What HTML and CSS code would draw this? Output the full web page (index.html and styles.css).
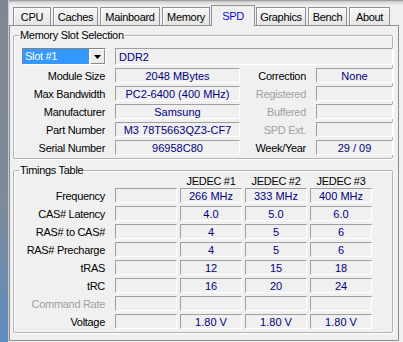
FILE: index.html
```html
<!DOCTYPE html>
<html>
<head>
	<meta charset="utf-8"/>
	<title>CPU-Z SPD</title>
	<link rel="stylesheet" href="styles.css">
</head>
<body>
	<div class="window">
		<div class="frame"></div>
		<div class="client">
			<div class="topband"></div>
			<ul class="tabs">
				<li class="tab">CPU</li>
				<li class="tab">Caches</li>
				<li class="tab">Mainboard</li>
				<li class="tab">Memory</li>
				<li class="tab active">SPD</li>
				<li class="tab">Graphics</li>
				<li class="tab">Bench</li>
				<li class="tab">About</li>
			</ul>
			<div class="panel">
				<fieldset class="group slot-group">
					<legend>Memory Slot Selection</legend>
					<div class="slot-grid">
						<div class="combo">
							<span class="combo-value">Slot #1</span>
							<span class="combo-btn"><svg width="7" height="4" viewBox="0 0 7 4"><polygon points="0,0 7,0 3.5,4" fill="#000"/></svg></span>
						</div>
						<div class="field wide left">DDR2</div>

						<div class="label">Module Size</div>
						<div class="field">2048 MBytes</div>
						<div class="label">Correction</div>
						<div class="field">None</div>

						<div class="label">Max Bandwidth</div>
						<div class="field">PC2-6400 (400 MHz)</div>
						<div class="label off">Registered</div>
						<div class="field"></div>

						<div class="label">Manufacturer</div>
						<div class="field">Samsung</div>
						<div class="label off">Buffered</div>
						<div class="field"></div>

						<div class="label">Part Number</div>
						<div class="field">M3 78T5663QZ3-CF7</div>
						<div class="label off">SPD Ext.</div>
						<div class="field"></div>

						<div class="label">Serial Number</div>
						<div class="field">96958C80</div>
						<div class="label">Week/Year</div>
						<div class="field">29 / 09</div>
					</div>
				</fieldset>

				<fieldset class="group timing-group">
					<legend>Timings Table</legend>
					<div class="timing-grid">
						<div></div>
						<div></div>
						<div class="head">JEDEC #1</div>
						<div class="head">JEDEC #2</div>
						<div class="head">JEDEC #3</div>

						<div class="label">Frequency</div>
						<div class="field"></div>
						<div class="field">266 MHz</div>
						<div class="field">333 MHz</div>
						<div class="field">400 MHz</div>

						<div class="label">CAS# Latency</div>
						<div class="field"></div>
						<div class="field">4.0</div>
						<div class="field">5.0</div>
						<div class="field">6.0</div>

						<div class="label">RAS# to CAS#</div>
						<div class="field"></div>
						<div class="field">4</div>
						<div class="field">5</div>
						<div class="field">6</div>

						<div class="label">RAS# Precharge</div>
						<div class="field"></div>
						<div class="field">4</div>
						<div class="field">5</div>
						<div class="field">6</div>

						<div class="label">tRAS</div>
						<div class="field"></div>
						<div class="field">12</div>
						<div class="field">15</div>
						<div class="field">18</div>

						<div class="label">tRC</div>
						<div class="field"></div>
						<div class="field">16</div>
						<div class="field">20</div>
						<div class="field">24</div>

						<div class="label off">Command Rate</div>
						<div class="field"></div>
						<div class="field"></div>
						<div class="field"></div>
						<div class="field"></div>

						<div class="label">Voltage</div>
						<div class="field"></div>
						<div class="field">1.80 V</div>
						<div class="field">1.80 V</div>
						<div class="field">1.80 V</div>
					</div>
				</fieldset>
			</div>
		</div>
	</div>
</body>
</html>
```

FILE: styles.css
```css
* {
	box-sizing: border-box;
}
body {
	margin: 0;
	width: 403px;
	height: 342px;
	overflow: hidden;
	background: #f0f0f0;
	font-family: "Liberation Sans", Arial, sans-serif;
	font-size: 11px;
	letter-spacing: -0.3px;
	color: #000;
}
.window {
	display: flex;
	height: 342px;
}
.frame {
	width: 9px;
	flex-shrink: 0;
	background: linear-gradient(to bottom, #7e8791 0%, #7d8a98 60%, #5f8cbf 100%);
	border-right: 1px solid #c4cbd2;
}
.client {
	flex: 1;
	min-width: 0;
	display: flex;
	flex-direction: column;
}
.topband {
	height: 5px;
	background: linear-gradient(to bottom, #8e8e8e, #d8d8d8 40%, #ececec);
}

/* tabs */
.tabs {
	list-style: none;
	margin: 0;
	padding: 0 0 0 4px;
	height: 20px;
	display: flex;
	align-items: flex-end;
	gap: 2px;
	position: relative;
	z-index: 1;
}
.tab {
	height: 18px;
	padding-top: 1px;
	line-height: 16px;
	text-align: center;
	border: 1px solid #8e9097;
	border-bottom: none;
	background: linear-gradient(to bottom, #f6f6f6, #e5e5e5);
	box-shadow: inset 1px 1px 0 #fff;
}
.tab:nth-child(1) { width: 38px; }
.tab:nth-child(2) { width: 45px; }
.tab:nth-child(3) { width: 60px; }
.tab:nth-child(4) { width: 48px; }
.tab:nth-child(5) { width: 44px; }
.tab:nth-child(6) { width: 50px; }
.tab:nth-child(7) { width: 39px; }
.tab:nth-child(8) { width: 41px; }
.tab.active {
	height: 21px;
	margin: 0 -1px -1px;
	padding-top: 0;
	line-height: 20px;
	color: #0a0adc;
	background: #f0f0f0;
	box-shadow: none;
}

/* panel */
.panel {
	height: 316px;
	margin-right: 4px;
	border: 1px solid #898c95;
	background: #f0f0f0;
}
.group {
	margin: 3px 5px 0 3px;
	padding: 6px 1px 3px 8px;
	border: 1px solid #b3b3b3;
	border-radius: 2px;
	box-shadow: inset 1px 1px 0 #fff, 1px 1px 0 #fff;
	min-width: 0;
}
.group legend {
	padding: 0 1px;
	margin-left: -3px;
	line-height: 13px;
}
.timing-group {
	margin-top: 5px;
	padding-top: 0;
}

.label {
	padding: 1px 10px 0 0;
	line-height: 14px;
	text-align: right;
	white-space: nowrap;
}
.label.off {
	color: #a0a0a0;
}
.field {
	height: 15px;
	padding-top: 1px;
	line-height: 12px;
	text-align: center;
	white-space: nowrap;
	overflow: hidden;
	letter-spacing: 0;
	color: #000080;
	border: 1px solid;
	border-color: #a0a0a0 #fff #fff #a0a0a0;
}
.field.left {
	text-align: left;
	padding-left: 3px;
}

/* memory slot */
.slot-grid {
	display: grid;
	grid-template-columns: 93px 125px 76px 77px;
	grid-template-rows: 17px repeat(5, 15px);
	row-gap: 3px;
}
.slot-grid .field.wide {
	grid-column: 2 / 5;
	height: 17px;
	padding-top: 2px;
}
.combo {
	width: 84px;
	height: 17px;
	display: flex;
	border: 1px solid;
	border-color: #828282 #fff #fff #828282;
	background: #fff;
}
.combo-value {
	flex: 1;
	margin: 0 1px 0 0;
	padding: 1px 0 0 2px;
	line-height: 13px;
	background: #3399ff;
	color: #fff;
}
.combo-btn {
	width: 15px;
	display: flex;
	align-items: center;
	justify-content: center;
	background: #ececec;
	border: 1px solid;
	border-color: #fff #8a8a8a #8a8a8a #fff;
}

/* timings */
.timing-grid {
	display: grid;
	grid-template-columns: 90px 62px 62px 62px 62px;
	grid-template-rows: 8px repeat(8, 15px);
	column-gap: 3px;
	row-gap: 3px;
}
.timing-grid .label {
	padding-right: 7px;
}
.head {
	line-height: 8px;
	text-align: center;
	white-space: nowrap;
}
```
